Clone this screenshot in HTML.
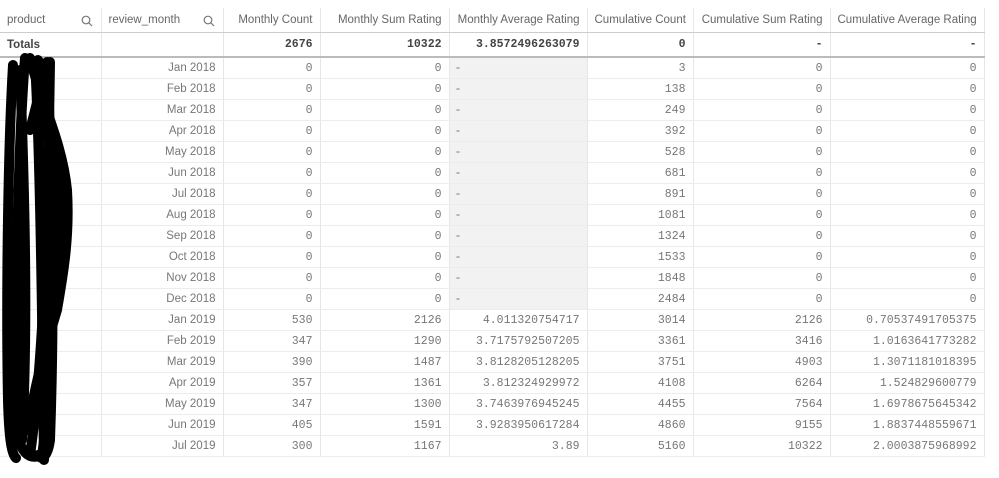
<!DOCTYPE html>
<html><head><meta charset="utf-8"><style>
body{margin:0;background:#fff;width:999px;height:478px;overflow:hidden;position:relative}
table{position:absolute;left:0;top:8px;border-collapse:collapse;table-layout:fixed;width:984px}
td,th{padding:0 7px;white-space:nowrap;overflow:hidden;border-right:1px solid #e6e6e6;border-bottom:1px solid #ececec;height:20px;text-align:right;font-family:"Liberation Mono",monospace;font-size:11.5px;color:#777}
th{font-family:"Liberation Sans",sans-serif;font-weight:normal;font-size:11.5px;color:#666;height:24px;border-bottom:1px solid #ccc;text-align:left;position:relative}
th.r{text-align:right}
tr.tot td{font-weight:bold;color:#444;height:23px;border-bottom:2px solid #bbb}
tr.tot td.l{font-family:"Liberation Sans",sans-serif;text-align:left;font-size:11.5px}
td.g{background:#f2f2f2;text-align:left;padding-left:5px}
td.ph{font-family:"Liberation Sans",sans-serif}
.s{position:absolute;right:8px;top:7px}
svg.sc{position:absolute;left:0;top:0}
</style></head><body>
<table>
<colgroup><col style="width:101px"><col style="width:122px"><col style="width:97px"><col style="width:129px"><col style="width:138px"><col style="width:106px"><col style="width:137px"><col style="width:154px"></colgroup>
<tr><th>product<svg class="s" width="12" height="12" viewBox="0 0 12 12" fill="none" stroke="#777" stroke-width="1.2"><circle cx="5" cy="5" r="3.8"/><path d="M7.8 7.8 L11 11"/></svg></th><th>review_month<svg class="s" width="12" height="12" viewBox="0 0 12 12" fill="none" stroke="#777" stroke-width="1.2"><circle cx="5" cy="5" r="3.8"/><path d="M7.8 7.8 L11 11"/></svg></th><th class="r">Monthly Count</th><th class="r">Monthly Sum Rating</th><th class="r">Monthly Average Rating</th><th class="r">Cumulative Count</th><th class="r">Cumulative Sum Rating</th><th class="r">Cumulative Average Rating</th></tr>
<tr class="tot"><td class="l">Totals</td><td></td><td>2676</td><td>10322</td><td>3.8572496263079</td><td>0</td><td>-</td><td>-</td></tr>
<tr><td></td><td class="ph">Jan 2018</td><td>0</td><td>0</td><td class="g">-</td><td>3</td><td>0</td><td>0</td></tr>
<tr><td></td><td class="ph">Feb 2018</td><td>0</td><td>0</td><td class="g">-</td><td>138</td><td>0</td><td>0</td></tr>
<tr><td></td><td class="ph">Mar 2018</td><td>0</td><td>0</td><td class="g">-</td><td>249</td><td>0</td><td>0</td></tr>
<tr><td></td><td class="ph">Apr 2018</td><td>0</td><td>0</td><td class="g">-</td><td>392</td><td>0</td><td>0</td></tr>
<tr><td></td><td class="ph">May 2018</td><td>0</td><td>0</td><td class="g">-</td><td>528</td><td>0</td><td>0</td></tr>
<tr><td></td><td class="ph">Jun 2018</td><td>0</td><td>0</td><td class="g">-</td><td>681</td><td>0</td><td>0</td></tr>
<tr><td></td><td class="ph">Jul 2018</td><td>0</td><td>0</td><td class="g">-</td><td>891</td><td>0</td><td>0</td></tr>
<tr><td></td><td class="ph">Aug 2018</td><td>0</td><td>0</td><td class="g">-</td><td>1081</td><td>0</td><td>0</td></tr>
<tr><td></td><td class="ph">Sep 2018</td><td>0</td><td>0</td><td class="g">-</td><td>1324</td><td>0</td><td>0</td></tr>
<tr><td></td><td class="ph">Oct 2018</td><td>0</td><td>0</td><td class="g">-</td><td>1533</td><td>0</td><td>0</td></tr>
<tr><td></td><td class="ph">Nov 2018</td><td>0</td><td>0</td><td class="g">-</td><td>1848</td><td>0</td><td>0</td></tr>
<tr><td></td><td class="ph">Dec 2018</td><td>0</td><td>0</td><td class="g">-</td><td>2484</td><td>0</td><td>0</td></tr>
<tr><td></td><td class="ph">Jan 2019</td><td>530</td><td>2126</td><td>4.011320754717</td><td>3014</td><td>2126</td><td>0.70537491705375</td></tr>
<tr><td></td><td class="ph">Feb 2019</td><td>347</td><td>1290</td><td>3.7175792507205</td><td>3361</td><td>3416</td><td>1.0163641773282</td></tr>
<tr><td></td><td class="ph">Mar 2019</td><td>390</td><td>1487</td><td>3.8128205128205</td><td>3751</td><td>4903</td><td>1.3071181018395</td></tr>
<tr><td></td><td class="ph">Apr 2019</td><td>357</td><td>1361</td><td>3.812324929972</td><td>4108</td><td>6264</td><td>1.524829600779</td></tr>
<tr><td></td><td class="ph">May 2019</td><td>347</td><td>1300</td><td>3.7463976945245</td><td>4455</td><td>7564</td><td>1.6978675645342</td></tr>
<tr><td></td><td class="ph">Jun 2019</td><td>405</td><td>1591</td><td>3.9283950617284</td><td>4860</td><td>9155</td><td>1.8837448559671</td></tr>
<tr><td></td><td class="ph">Jul 2019</td><td>300</td><td>1167</td><td>3.89</td><td>5160</td><td>10322</td><td>2.0003875968992</td></tr>
</table>
<svg class="sc" width="120" height="478" fill="none" stroke="#000" stroke-linecap="round" stroke-width="10">
<path d="M13 65 C8 150 6 300 8 400 C9 440 12 455 16 458"/>
<path d="M25 58 C18 150 15 300 16 420 C18 455 30 460 42 455 C48 420 52 300 50 200 C48 120 45 70 38 60"/>
<path d="M30 58 C40 100 62 140 67 190 C70 240 62 280 57 310 C48 340 35 380 28 430"/>
<path d="M35 62 C40 150 42 300 44 460"/>
<path d="M47 62 C52 160 55 300 50 440 C48 455 42 462 38 455"/>
<path d="M20 70 C25 200 28 330 22 440"/>
<path d="M30 130 C38 100 42 80 48 64"/>
<path d="M50 62 C48 200 45 350 30 455"/>
<path d="M40 80 C50 130 58 170 60 230 C58 290 50 330 45 380"/>
</svg>
</body></html>
